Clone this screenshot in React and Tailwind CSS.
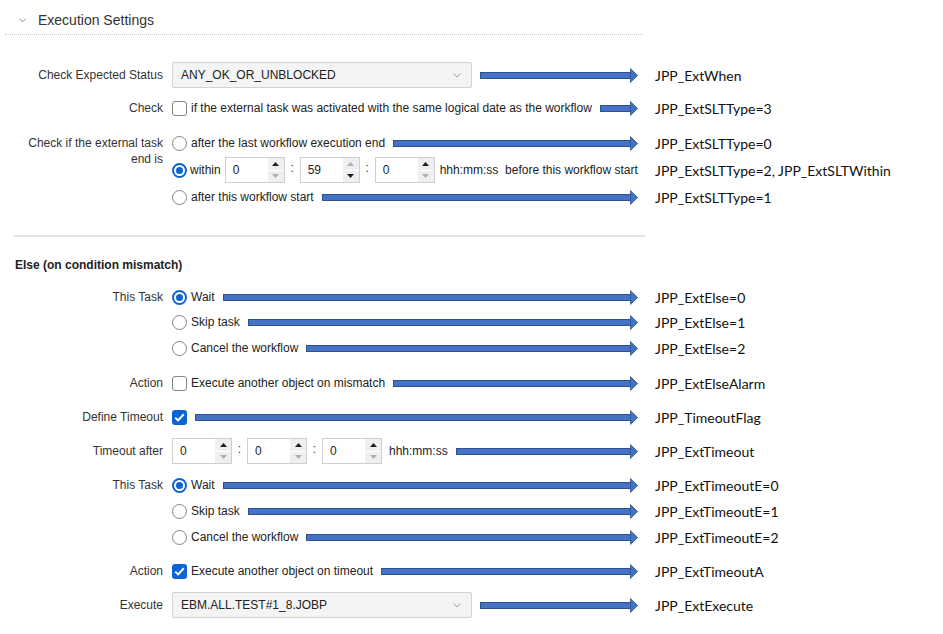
import React from "react";

function Arrow() {
  return (
    <div className="flex-1 flex items-center min-w-0 ml-[8px]">
      <div className="flex-1 h-[7px] bg-[#4472c4] border border-[#2f528f] border-r-0" />
      <svg width="8" height="15" viewBox="0 0 8 15" className="shrink-0 -ml-px">
        <path d="M0.4 0.6 L7.6 7.5 L0.4 14.4 Z" fill="#4472c4" stroke="#2f528f" strokeWidth="0.8" />
      </svg>
    </div>
  );
}

function Code({ children }) {
  return (
    <div className="ml-[17px] font-['Lato',sans-serif] text-[14px] text-[#111] whitespace-nowrap">
      {children}
    </div>
  );
}

function Line({ label, children, arrow = true, code, className = "", h = "h-[20px]", labelClass = "" }) {
  return (
    <div className={`flex items-center ${h} ${className}`}>
      <div className="w-[638px] h-full flex items-center shrink-0">
        <div className={`w-[163px] shrink-0 text-right text-[#333] whitespace-nowrap ${labelClass}`}>{label}</div>
        <div className="ml-[9px] flex items-center shrink-0">{children}</div>
        {arrow ? <Arrow /> : <div className="flex-1" />}
      </div>
      <Code>{code}</Code>
    </div>
  );
}

function Checkbox({ checked }) {
  return checked ? (
    <div className="w-[15px] h-[15px] rounded-[3px] bg-[#0b63d6] flex items-center justify-center shrink-0">
      <svg width="11" height="9" viewBox="0 0 11 9">
        <path d="M1.2 4.6 L4.1 7.4 L9.8 1.3" fill="none" stroke="white" strokeWidth="2" />
      </svg>
    </div>
  ) : (
    <div className="w-[15px] h-[15px] rounded-[3px] border-[1.5px] border-[#858585] bg-white shrink-0" />
  );
}

function Radio({ checked }) {
  return checked ? (
    <div className="w-[15px] h-[15px] rounded-full border-2 border-[#0b63d6] flex items-center justify-center shrink-0">
      <div className="w-[7px] h-[7px] rounded-full bg-[#0b63d6]" />
    </div>
  ) : (
    <div className="w-[15px] h-[15px] rounded-full border-[1.5px] border-[#858585] bg-white shrink-0" />
  );
}

function Tri({ up, dark }) {
  return (
    <svg width="7" height="4" viewBox="0 0 7 4">
      <path d={up ? "M0 4 L3.5 0 L7 4 Z" : "M0 0 L3.5 4 L7 0 Z"} fill={dark ? "#1e1e1e" : "#b0b0b0"} />
    </svg>
  );
}

function Spin({ value, max = false }) {
  const atMin = value === "0";
  return (
    <div className="w-[60px] h-[26px] border border-[#cfcfcf] bg-white flex shrink-0">
      <div className="flex-1 flex items-center pl-[7px] text-[12px] text-[#222]">{value}</div>
      <div className="w-[16px] flex flex-col bg-[#efefef]">
        <div className="flex-1 flex items-center justify-center">
          <Tri up dark={!max} />
        </div>
        <div className="h-px bg-white" />
        <div className="flex-1 flex items-center justify-center">
          <Tri dark={!atMin} />
        </div>
      </div>
    </div>
  );
}

function Colon() {
  return <div className="w-[15px] text-center text-[12px] text-[#333] pb-[5px]">:</div>;
}

function Select({ value }) {
  return (
    <div className="w-[300px] h-[26px] border border-[#d2d2d2] bg-[#f4f4f4] rounded-[2px] flex items-center justify-between pl-[8px] pr-[10px]">
      <span className="text-[12px] text-[#222]">{value}</span>
      <svg width="8" height="5" viewBox="0 0 8 5">
        <path d="M0.5 0.5 L4 4 L7.5 0.5" fill="none" stroke="#a0a0a0" strokeWidth="1" />
      </svg>
    </div>
  );
}

function Opt({ text }) {
  return <span className="ml-[4px] whitespace-nowrap text-[#222]">{text}</span>;
}

export default function App() {
  return (
    <div className="w-[943px] h-[634px] bg-white overflow-hidden font-['Liberation_Sans',Arial,sans-serif] text-[12px] text-[#333] flex flex-col">
      {/* header */}
      <div className="mt-[5px] ml-[5px] w-[638px] h-[30px] border-b border-dotted border-[#c8c8c8] flex items-center shrink-0">
        <svg width="7" height="5" viewBox="0 0 7 5" className="ml-[14px] mt-[2px]">
          <path d="M0.5 0.8 L3.5 3.8 L6.5 0.8" fill="none" stroke="#8a8a8a" strokeWidth="1" />
        </svg>
        <span className="ml-[12px] text-[14px] text-[#333] mt-[2px]">Execution Settings</span>
      </div>

      <Line className="mt-[27px]" h="h-[26px]" label="Check Expected Status" code="JPP_ExtWhen">
        <Select value="ANY_OK_OR_UNBLOCKED" />
      </Line>

      <Line className="mt-[10px]" label="Check" code="JPP_ExtSLTType=3">
        <Checkbox />
        <span className="ml-[4px] whitespace-nowrap text-[#222]">
          if the external task was activated with the same logical date as the workflow
        </span>
      </Line>

      <Line
        className="mt-[15px]"
        labelClass="self-start leading-[16px] pt-[2px]"
        label={
          <>
            Check if the external task
            <br />
            end is
          </>
        }
        code="JPP_ExtSLTType=0"
      >
        <Radio />
        <Opt text="after the last workflow execution end" />
      </Line>

      <Line className="mt-[4px]" h="h-[26px]" arrow={false} code="JPP_ExtSLTType=2, JPP_ExtSLTWithin">
        <Radio checked />
        <span className="ml-[3px] whitespace-nowrap text-[#222]">within</span>
        <div className="ml-[4px] flex items-center">
          <Spin value="0" />
          <Colon />
          <Spin value="59" max />
          <Colon />
          <Spin value="0" />
          <span className="ml-[5px] whitespace-nowrap text-[#222]">hhh:mm:ss&nbsp; before this workflow start</span>
        </div>
      </Line>

      <Line className="mt-[4px]" code="JPP_ExtSLTType=1">
        <Radio />
        <Opt text="after this workflow start" />
      </Line>

      <div className="mt-[28px] ml-[14px] w-[631px] h-[2px] bg-[#e3e3e3] shrink-0" />

      <div className="mt-[20px] h-[16px] leading-[16px] pl-[15px] font-bold text-[#222] shrink-0">
        Else (on condition mismatch)
      </div>

      <Line className="mt-[14px]" label="This Task" code="JPP_ExtElse=0">
        <Radio checked />
        <Opt text="Wait" />
      </Line>
      <Line className="mt-[5px]" code="JPP_ExtElse=1">
        <Radio />
        <Opt text="Skip task" />
      </Line>
      <Line className="mt-[6px]" code="JPP_ExtElse=2">
        <Radio />
        <Opt text="Cancel the workflow" />
      </Line>

      <Line className="mt-[15px]" label="Action" code="JPP_ExtElseAlarm">
        <Checkbox />
        <Opt text="Execute another object on mismatch" />
      </Line>

      <Line className="mt-[14px]" label="Define Timeout" code="JPP_TimeoutFlag">
        <Checkbox checked />
      </Line>

      <Line className="mt-[11px]" h="h-[26px]" label="Timeout after" code="JPP_ExtTimeout">
        <Spin value="0" />
        <Colon />
        <Spin value="0" />
        <Colon />
        <Spin value="0" />
        <span className="ml-[7px] whitespace-nowrap text-[#222]">hhh:mm:ss</span>
      </Line>

      <Line className="mt-[11px]" label="This Task" code="JPP_ExtTimeoutE=0">
        <Radio checked />
        <Opt text="Wait" />
      </Line>
      <Line className="mt-[6px]" code="JPP_ExtTimeoutE=1">
        <Radio />
        <Opt text="Skip task" />
      </Line>
      <Line className="mt-[6px]" code="JPP_ExtTimeoutE=2">
        <Radio />
        <Opt text="Cancel the workflow" />
      </Line>

      <Line className="mt-[14px]" label="Action" code="JPP_ExtTimeoutA">
        <Checkbox checked />
        <Opt text="Execute another object on timeout" />
      </Line>

      <Line className="mt-[11px]" h="h-[26px]" label="Execute" code="JPP_ExtExecute">
        <Select value="EBM.ALL.TEST#1_8.JOBP" />
      </Line>
    </div>
  );
}
